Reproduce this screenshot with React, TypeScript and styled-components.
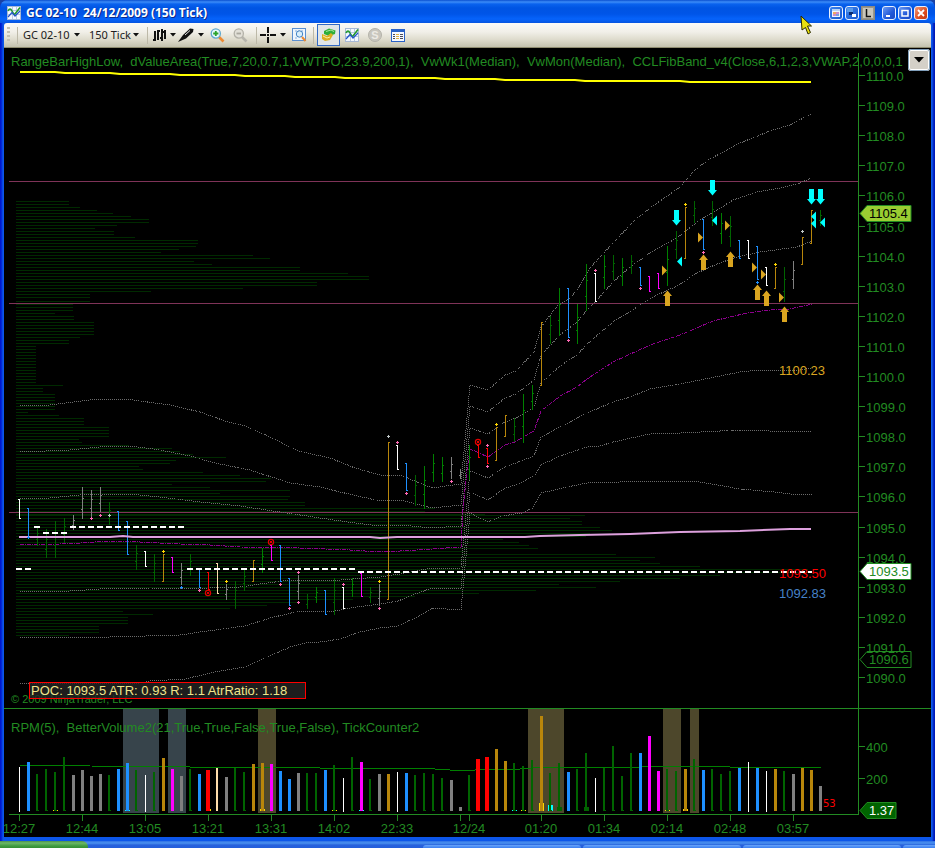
import React from "react";
import styled, { createGlobalStyle } from "styled-components";

const GlobalStyle = createGlobalStyle`
  * { box-sizing: border-box; }
  html, body { margin: 0; background: #1941a5; }
`;

const UI_FONT = `"Noto Sans", "Open Sans", sans-serif`;
const CHART_FONT = `"Liberation Sans", Arial, sans-serif`;

/* ---------- window frame ---------- */

const Desktop = styled.div`
  display: flex;
  flex-direction: column;
  min-height: 100vh;
  font-family: ${UI_FONT};
`;

const Frame = styled.main`
  position: relative;
  display: flex;
  flex-direction: column;
  padding: 0 4px 4px;
  border-radius: 8px 8px 0 0;
  background: linear-gradient(90deg, #0019cf 0, #0019cf 1px, #0c56ea 3px, #0c56ea calc(100% - 3px), #0019b8 calc(100% - 1px));
`;

const TitleBar = styled.header`
  display: flex;
  align-items: center;
  height: 23px;
  margin: 0 -4px;
  padding: 3px 7px 0;
  border-radius: 8px 8px 0 0;
  background: linear-gradient(180deg, #0a4fd0 0, #3c8cf8 2px, #0a62ee 4px, #0054e3 8px, #0055e8 14px, #0663fb 19px, #0554e0 23px);
`;

const Title = styled.h1`
  flex: 1;
  margin: 0 0 0 5px;
  font: 700 12px/18px "Open Sans", "Noto Sans", sans-serif;
  color: #fff;
  text-shadow: 1px 1px 0 #0a2a8c;
  white-space: pre;
`;

const Controls = styled.div`
  display: flex;
  gap: 2px;
  margin-left: 7px;
`;

const ControlButton = styled.button<{ $tone: "blue" | "red" | "gray" | "light" }>`
  display: flex;
  align-items: center;
  justify-content: center;
  width: 14px;
  height: 14px;
  padding: 0;
  border: 1px solid ${(p) => (p.$tone === "gray" ? "#8d8a80" : "#e8f0ff")};
  border-radius: ${(p) => (p.$tone === "gray" ? 0 : 3)}px;
  background: ${(p) =>
    ({
      blue: "linear-gradient(135deg, #6c9cf4, #2258d8 60%, #1a4ac4)",
      red: "linear-gradient(135deg, #f09878, #dc4c20 60%, #c03810)",
      gray: "#9a978c",
      light: "linear-gradient(135deg, #3c84f0, #1a58cc)",
    })[p.$tone]};
`;

const Toolbar = styled.nav`
  display: flex;
  align-items: center;
  height: 25px;
  padding: 0 3px;
  border-bottom: 1px solid #8f8c70;
  border-radius: 3px 3px 0 0;
  background: linear-gradient(180deg, #fbfaf7 0, #f1efe8 9px, #dddacb 17px, #c4c2ae 24px);
`;

const Grip = styled.span`
  width: 3px;
  height: 16px;
  background: repeating-linear-gradient(180deg, #c4c1b2 0, #c4c1b2 2px, transparent 2px, transparent 4px);
`;

const Separator = styled.span<{ $left: number; $right: number }>`
  width: 1px;
  height: 17px;
  margin-left: ${(p) => p.$left}px;
  margin-right: ${(p) => p.$right}px;
  background: #bdb9a8;
`;

const PickerLabel = styled.label<{ $width: number }>`
  display: flex;
  align-items: center;
  width: ${(p) => p.$width}px;
  & + & { margin-left: 9px; }
`;

const Picker = styled.select`
  appearance: none;
  flex: 1;
  min-width: 0;
  height: 18px;
  padding: 0;
  border: 0;
  background: transparent;
  color: #202020;
  font: 11px/18px ${UI_FONT};
`;

const ToolButton = styled.button<{ $width: number; $active?: boolean }>`
  display: flex;
  align-items: center;
  justify-content: center;
  gap: 4px;
  width: ${(p) => p.$width}px;
  height: ${(p) => (p.$active ? 22 : 20)}px;
  padding: 0;
  border: ${(p) => (p.$active ? "1px solid #316ac5" : "0")};
  background: ${(p) => (p.$active ? "#e1e6e8" : "transparent")};
`;

const ChartPane = styled.section`
  position: relative;
  background: #000;
`;

const ChartSvg = styled.svg`
  display: block;
  width: 100%;
  height: auto;
  font-family: ${CHART_FONT};
  font-size: 13px;
`;

const ListButton = styled.button`
  position: absolute;
  top: 1px;
  right: 1px;
  display: flex;
  align-items: center;
  justify-content: center;
  width: 22px;
  height: 22px;
  padding: 0;
  border: 2px solid #fff;
  border-radius: 3px;
  outline: 1px solid #7f9db9;
  outline-offset: -1px;
  background: #d4d0c8;
`;

const Pointer = styled.svg`
  position: absolute;
  top: 15px;
  right: 122px;
`;

const Taskbar = styled.footer`
  display: flex;
  flex: 1;
  min-height: 7px;
  overflow: hidden;
  background: linear-gradient(180deg, #2f6fe4 0, #4b92f0 2px, #2862dc 4px, #245edb 7px);
`;

const StartEdge = styled.div`
  flex: none;
  width: 88px;
  border-radius: 0 6px 0 0;
  background: linear-gradient(180deg, #4b8f4b 0, #6cb866 2px, #3f9a3f 5px, #358f35 7px);
`;

const TaskSlots = styled.div`
  display: flex;
  flex: 1;
  min-width: 0;
  gap: 2px;
  padding: 4px 0 0 335px;
`;

const TaskSlot = styled.div`
  flex: 0 0 158px;
  border-radius: 3px 3px 0 0;
  background: linear-gradient(180deg, #6aa5fa, #3c7ff0);
`;

/* ---------- icons ---------- */

const Caret = () => (
  <svg width="6" height="4" viewBox="0 0 6 4" aria-hidden="true">
    <path d="M0 0H6L3 3.5Z" fill="#111" />
  </svg>
);

const ChartIcon = () => (
  <svg width="14" height="14" viewBox="0 0 14 14" aria-hidden="true">
    <rect x="0.5" y="0.5" width="13" height="13" fill="#f4f8ff" stroke="#a7b9d6" />
    <path d="M1 4.5H13M1 8.5H13M5.5 1V13M9.5 1V13" stroke="#b9c9e4" />
    <path d="M1 5Q3 1 5 5T8 8L13 1.5" fill="none" stroke="#249a2c" strokeWidth="1.6" />
    <path d="M1 11L5 6.5L8 10L13 5" fill="none" stroke="#2454c8" strokeWidth="1.2" />
  </svg>
);

const Glass = ({ muted }: { muted?: boolean }) => (
  <svg width="15" height="15" viewBox="0 0 15 15" aria-hidden="true">
    <path d="M9 9L13.5 13.5" stroke={muted ? "#b7b5ad" : "#ed8a32"} strokeWidth="2.6" />
    <circle cx="5.8" cy="5.5" r="4.6" fill={muted ? "#e2e0d8" : "#e6f6fb"} stroke={muted ? "#b3b1a8" : "#5fa8cf"} strokeWidth="1.3" />
    <path d={muted ? "M3.5 5.5H8" : "M3.2 5.5H8.4M5.8 3V8"} stroke={muted ? "#aaa89f" : "#2ba32b"} strokeWidth="1.8" />
  </svg>
);

/* ---------- chart data ---------- */

const GREEN = "#228b22";
const TONES: Record<string, string> = {
  g: "#006400",
  n: "#008000",
  b: "#1e90ff",
  w: "#ffffff",
  a: "#808080",
  o: "#b8860b",
  m: "#ff00ff",
  r: "#ff0000",
  e: "#ffdead",
};
const barX = (i: number) => 19 + i * 9;

/* tone, high, low for every bar in time order */
const PRICE = `w499-519 b508-537 g527-546 g529-558 g521-558 g518-543 a515-530 a487-519 a490-518 a487-512
g502-525 b511-531 b521-555 g545-570 w551-567 g554-582 o554-582 m557-573 a563-585 g554-576
b569-588 r572-590 e563-594 a584-600 g581-609 g569-591 o560-582 n548-573 m545-561 b545-582
b578-606 a575-600 g594-609 n587-603 b590-615 g578-615 w587-609 n578-597 m573-597 g587-603
a584-606 o442-600 w445-470 b463-491 g475-506 n466-509 n454-482 n457-482 a457-479 a469-479
n445-480 r445-458 r448-464 o427-461 o415-437 g418-442 n394-443 n385-410 o322-386 g316-344
n288-336 b288-338 n304-344 n264-311 w273-302 n255-289 g255-280 n258-286 g255-274 b267-286
m276-292 m273-289 n246-286 g231-259 o207-259 g201-223 b219-250 g201-226 n213-244 g216-247
b240-259 w240-259 b246-280 w267-286 o267-289 g267-302 a261-289 o237-265 o210-244 g210-226`
  .split(/\s+/)
  .map((s) => {
    const [hi, lo] = s.slice(1).split("-").map(Number);
    return { tone: s[0], hi, lo };
  });

/* tone and bar top for every volume bar */
const VOLUME = `w767 b762 g774 g769 g772 g757 a775 a770 a776 a774 g775 b769 b763 g770 w775 g772 o758 m769 a776 g769
b774 r770 e768 a777 g768 g772 o764 o763 m764 b771 b779 a773 g773 g773 b770 g765 w778 g757 m762 g779
a774 o774 w772 b773 g775 g773 g774 g778 a780 a807 g775 r759 r757 o749 o761 g763 g766 g760 o716 g773
g763 b772 g769 g753 w778 g768 g746 g776 g753 b753 m736 m771 g769 g771 o769 g759 b770 g769 g774 g771
b768 w762 b768 w771 o769 g771 a774 o768 o770 a786`
  .split(/\s+/)
  .map((s) => ({ tone: s[0], top: Number(s.slice(1)) }));

const VOLUME_WIDTH: Record<string, number> = { g: 2, w: 1, e: 2, r: 4 };

/* right edge of each profile row, rows 3px apart */
const PROFILE_TOP = [69, 69, 80, 97, 113, 131, 149, 149, 117, 95, 114, 114, 135, 198, 198, 196, 179, 161, 253, 270, 194, 212, 300, 300, 348, 369, 369, 317, 317, 243, 151, 90, 90];
const PROFILE_MID = [90, 73, 73, 73, 55, 74, 74, 94, 94, 94, 94, 94, 80, 69, 69, 36, 36, 36, 36, 36, 36, 36, 36, 36, 36, 36, 36, 36, 63, 43, 43, 55, 55, 55, 55, 55, 55, 28, 59, 84, 84, 84, 109, 109, 109, 109, 79, 82, 129, 172, 180, 193, 226, 176, 170, 139, 143, 203, 240, 271, 266, 172, 210, 290, 220, 290, 288, 305, 305, 435, 425, 485];
const PROFILE_LOW = [585, 570, 582, 582, 600, 612, 590, 586, 503, 519, 529, 538, 468, 616, 655, 640, 660, 700, 808, 808, 720, 680, 620, 559, 596, 536, 479, 415, 353, 300, 267, 230, 123, 153, 128, 128, 128, 99, 99, 99, 69];
const profileRows = [
  ...PROFILE_TOP.map((x, i) => [201 + i * 3, x]),
  ...PROFILE_MID.map((x, i) => [301 + i * 3, x]),
  ...PROFILE_LOW.map((x, i) => [515 + i * 3, x]),
];

const BANDS = [
  "20,406 50,405 90,400 110,399 125,399 170,405 200,412 225,421 245,426 270,437 298,451 330,458 355,468 380,475 400,475 432,488 461,484 470,385 488,390 505,375 516,371 534,352 541,327 558,305 570,298 577,290 590,268 614,242 635,220 650,208 680,187 695,170 708,160 740,143 770,131 790,125 811,114",
  "20,452 70,450 110,446 130,446 160,450 190,456 215,463 250,470 290,483 320,487 340,492 380,501 400,500 432,508 461,505 470,406 488,412 505,398 516,394 534,380 541,355 560,335 577,322 587,310 595,302 613,282 630,267 650,253 677,238 697,222 717,210 733,200 757,192 780,188 797,184 812,178",
  "20,498 50,498 80,495 110,494 130,494 160,497 200,502 240,506 280,512 320,518 355,523 380,526 400,525 432,528 461,526 470,428 488,434 505,422 516,418 534,407 541,383 560,366 577,355 587,344 613,322 637,307 657,295 677,286 697,273 717,264 737,257 760,252 797,247 812,241",
  "20,591 70,591 100,589 150,588 210,588 240,587 260,584 290,580 340,580 380,577 400,574 432,568 461,568 470,471 488,478 505,467 516,463 534,456 541,437 560,427 587,413 613,402 630,397 650,389 680,384 740,372 760,370 800,370 812,368",
  "20,637 110,637 180,635 200,632 245,626 270,618 300,611 335,611 350,608 380,604 398,601 415,594 432,588 461,589 470,492 488,500 505,488 516,485 534,476 541,465 560,456 587,447 600,446 613,442 650,434 680,433 740,430 770,431 795,432 812,431",
  "20,684 140,683 150,681 185,679 215,672 245,667 265,658 290,647 305,643 320,642 340,639 360,632 380,628 398,626 417,617 433,608 461,610 470,513 488,522 502,516 522,513 533,508 541,493 567,487 587,483 620,482 650,481 700,482 740,489 775,492 790,494 812,495",
];
const MEDIAN =
  "20,545 60,544 80,543 110,541 140,542 180,544 210,545 240,547 300,548 350,550 380,552 400,551 432,549 461,547 463,510 467,470 470,449 488,457 505,445 515,442 534,431 541,411 560,396 577,387 587,379 613,362 650,345 680,335 713,321 747,313 770,310 790,309 812,304";

/* kind of marker (pink, yellow, blue, silver, ring), bar index, y */
const MARKS: [string, number, number][] = [
  ["b", 1, 537], ["p", 8, 518], ["p", 9, 515], ["s", 10, 515], ["y", 16, 551], ["b", 18, 587], ["p", 20, 590],
  ["ring", 21, 593], ["y", 23, 581], ["ring", 28, 542], ["p", 29, 584], ["p", 30, 608], ["p", 31, 572], ["p", 31, 602],
  ["p", 36, 584], ["y", 40, 581], ["p", 40, 608], ["s", 41, 436], ["p", 42, 442], ["p", 43, 493], ["p", 48, 481],
  ["ring", 51, 442], ["p", 52, 445], ["p", 52, 466], ["y", 53, 424], ["p", 61, 340], ["p", 64, 270], ["p", 69, 288],
  ["y", 74, 204], ["p", 76, 252], ["b", 82, 282], ["y", 84, 264], ["s", 87, 231],
];
const MARK_TONES: Record<string, string> = { p: "#ff69b4", y: "#ffd700", b: "#1e90ff", s: "#c0c8c8" };

const ARROWS_DOWN = [[676, 210], [712, 180], [811, 189], [820, 189]];
const ARROWS_UP = [[667, 291], [703, 255], [730, 252], [757, 285], [766, 291], [784, 307]];
const TRI_LEFT = [[677, 261], [712, 220], [811, 216], [811, 223], [820, 222]];
const TRI_RIGHT = [[662, 270], [698, 237], [725, 225], [752, 267], [761, 274], [779, 297]];

const TIMES: [number, string][] = [
  [19, "12:27"], [82, "12:44"], [145, "13:05"], [208, "13:21"], [271, "13:31"], [334, "14:02"], [397, "22:33"],
  [469, "12/24"], [541, "01:20"], [604, "01:34"], [667, "02:14"], [730, "02:48"], [793, "03:57"],
];

const ZONES = [[123, 36, "#37444b"], [168, 18, "#37444b"], [258, 18, "#4d472b"], [528, 36, "#4d472b"], [663, 18, "#4d472b"], [690, 9, "#4d472b"]] as const;

const BLIPS = [
  [53, 810, "#ffd700"], [125, 810, "#00ffff"], [206, 809, "#ffd700"], [260, 809, "#ffd700"], [332, 810, "#ffd700"],
  [359, 810, "#00ffff"], [512, 810, "#00ffff"], [521, 810, "#ffd700"], [539, 803, "#ffd700"], [548, 805, "#00ffff"],
  [557, 807, "#006400"], [584, 807, "#006400"], [665, 810, "#ffd700"], [683, 809, "#ffd700"],
] as const;

/* indicator names are separated by a comma and two spaces */
const PRICE_INDICATORS = [
  "RangeBarHighLow",
  "dValueArea(True,7,20,0.7,1,VWTPO,23.9,200,1)",
  "VwWk1(Median)",
  "VwMon(Median)",
  "CCLFibBand_v4(Close,6,1,2,3,VWAP,2,0,0,0,1",
].join(",\u00a0 ");

/* ---------- chart parts ---------- */

const Mark = ({ kind, x, y }: { kind: string; x: number; y: number }) =>
  kind === "ring" ? (
    <g fill="none" stroke="#e00000">
      <circle cx={x} cy={y} r="2.6" strokeWidth="1.2" />
      <path d={`M${x - 1} ${y}h2`} strokeWidth="2" />
    </g>
  ) : (
    <path d={`M${x - 1} ${y + 0.5}h3M${x + 0.5} ${y - 1}v3`} stroke={MARK_TONES[kind]} />
  );

const Tag = ({ y, text, fill, color, width = 44 }: { y: number; text: string; fill: string; color: string; width?: number }) => (
  <g>
    <path d={`M860 ${y + 0.5}l7 -8h${width}v16h${-width}z`} fill={fill} stroke={GREEN} />
    <text x="869" y={y + 5} fill={color}>{text}</text>
  </g>
);

const ProfileLayer = () => (
  <g stroke="#002a00" shapeRendering="crispEdges">
    {profileRows.map(([y, x]) => (
      <path key={y} d={`M16 ${y + 0.5}H${x}`} />
    ))}
  </g>
);

const BandLayer = () => (
  <g fill="none" shapeRendering="crispEdges">
    {BANDS.map((points) => (
      <polyline key={points} points={points} stroke="#6c6c6c" strokeDasharray="1 1" />
    ))}
    <polyline points={MEDIAN} stroke="#8b008b" strokeDasharray="4 1 1 1" />
  </g>
);

const PriceLayer = () => (
  <g shapeRendering="crispEdges">
    {PRICE.map(({ tone, hi, lo }, i) => {
      const x = barX(i);
      const rising = tone === "o";
      const third = Math.round((lo - hi) / 3);
      const plain = tone === "g" || tone === "n" || tone === "a";
      const open = rising ? lo - 1 : hi + (plain ? third * 2 : 0);
      const close = rising ? hi : plain ? hi + third : lo - 1;
      return (
        <path
          key={i}
          d={`M${x + 0.5} ${hi}V${lo}M${x - 1} ${open + 0.5}h2M${x} ${close + 0.5}h2`}
          stroke={TONES[tone]}
        />
      );
    })}
  </g>
);

const SignalLayer = () => (
  <g>
    {MARKS.map(([kind, i, y]) => (
      <Mark key={`${i}-${y}`} kind={kind} x={barX(i)} y={y} />
    ))}
    <g fill="#00ffff">
      {ARROWS_DOWN.map(([x, y]) => (
        <path key={x} d={`M${x - 2} ${y}h5v10h2l-4.5 5.5l-4.5 -5.5h2z`} />
      ))}
      {TRI_LEFT.map(([x, y]) => (
        <path key={`${x}-${y}`} d={`M${x} ${y + 0.5}l5 -5v10z`} />
      ))}
    </g>
    <g fill="#daa520">
      {ARROWS_UP.map(([x, y]) => (
        <path key={x} d={`M${x - 2} ${y + 15}h5v-10h2l-4.5 -5.5l-4.5 5.5h2z`} />
      ))}
      {TRI_RIGHT.map(([x, y]) => (
        <path key={x} d={`M${x + 5} ${y + 0.5}l-5 -5v10z`} />
      ))}
    </g>
  </g>
);

const VolumeLayer = () => (
  <g shapeRendering="crispEdges">
    <polyline
      points="20,765 80,765 90,766 190,767 320,768 435,769 450,770 475,770 490,769 520,769 545,767 640,767 655,766 720,766 730,767 821,767"
      fill="none"
      stroke="#008000"
    />
    {BLIPS.map(([x, y, fill]) => (
      <rect key={x} x={x} y={y} width="5" height={811 - y} fill={fill} />
    ))}
    {VOLUME.map(({ tone, top }, i) => {
      const w = VOLUME_WIDTH[tone] ?? 3;
      const x = barX(i) - (w > 1 ? 1 : 0) - (w > 3 ? 1 : 0);
      return (
        <g key={i} fill={TONES[tone]}>
          <rect x={x} y={top} width={w} height={(w === 1 ? 812 : 811) - top} />
          {tone === "g" && <rect x={x} y={810} width="3" height="1" />}
        </g>
      );
    })}
  </g>
);

const AxisLayer = () => (
  <g>
    <path d="M858.5 53V815M4 708.5H931M9 814.5H858" stroke={GREEN} />
    {Array.from({ length: 21 }, (_, i) => {
      const y = Math.round(75 + i * 30.1);
      return (
        <g key={i}>
          <path d={`M859 ${y + 0.5}h6`} stroke={GREEN} />
          <text x="866" y={y + 6} fill={GREEN}>{(1110 - i).toFixed(1)}</text>
        </g>
      );
    })}
    {[[746, "400"], [778, "200"]].map(([y, label]) => (
      <g key={label}>
        <path d={`M859 ${Number(y) + 0.5}h6`} stroke={GREEN} />
        <text x="866" y={Number(y) + 6} fill={GREEN}>{label}</text>
      </g>
    ))}
    <path d="M460.5 815v6" stroke={GREEN} />
    {TIMES.map(([x, label]) => (
      <g key={label}>
        <path d={`M${x + 0.5} 815v6`} stroke={GREEN} />
        <text x={x} y="833" textAnchor="middle" fill={GREEN}>{label}</text>
      </g>
    ))}
  </g>
);

const Chart = () => (
  <ChartSvg viewBox="4 48 927 789" role="img" aria-label="GC 02-10 price and volume chart">
    {ZONES.map(([x, w, fill]) => (
      <rect key={x} x={x} y="709" width={w} height="104" fill={fill} />
    ))}
    <ProfileLayer />
    <path d="M9 181.5H858M9 303.5H858M9 512.5H858" stroke="#7f3358" />
    <BandLayer />
    <polyline points="20,72 55,72 65,73 110,73 120,74 170,74 180,75 235,75 245,76 285,76 295,77 335,77 345,78 435,78 445,79 495,79 505,80 575,80 585,81 680,81 690,82 811,82" fill="none" stroke="#ffff00" strokeWidth="2" />
    <PriceLayer />
    <polyline points="19,537 110,537 123,536 133,537 370,537 380,538 397,537 525,537 540,536 580,535 630,534 680,532 740,531 790,529 811,529" fill="none" stroke="#dda0dd" strokeWidth="2" />
    <path d="M34 527h6M43 533h24M70 527h114M16 569h15M187 569h168M358 572h454" stroke="#fff" strokeWidth="2" strokeDasharray="6 3" shapeRendering="crispEdges" />
    <SignalLayer />
    <VolumeLayer />
    <AxisLayer />
    <g fill={GREEN}>
      <text x="11" y="66">{PRICE_INDICATORS}</text>
      <text x="11" y="732">{"RPM(5),\u00a0 BetterVolume2(21,True,True,False,True,False), TickCounter2"}</text>
      <text x="11" y="703" fontSize="11">© 2009 NinjaTrader, LLC</text>
    </g>
    <rect x="29.5" y="682.5" width="276" height="16" fill="#242424" fillOpacity="0.8" stroke="#ff0000" />
    <text x="31" y="695" fill="#f0e68c">POC: 1093.5 ATR: 0.93 R: 1.1 AtrRatio: 1.18</text>
    <text x="779" y="375" fill="#daa520">1100.23</text>
    <text x="779" y="578" fill="#ff0000">1093.50</text>
    <text x="779" y="598" fill="#4682c8">1092.83</text>
    <text x="823" y="807" fill="#ff0000" fontSize="10" fontFamily="DejaVu Sans, sans-serif">53</text>
    <Tag y={213} text="1105.4" fill="#9acd32" color="#000" />
    <Tag y={571} text="1093.5" fill="#fff" color={GREEN} />
    <Tag y={659} text="1090.6" fill="none" color={GREEN} />
    <Tag y={810} text="1.37" fill="#006400" color="#fff" width={29} />
  </ChartSvg>
);

/* ---------- page ---------- */

export default function App() {
  return (
    <Desktop>
      <GlobalStyle />
      <Frame>
        <TitleBar>
          <ChartIcon />
          <Title>GC 02-10  24/12/2009 (150 Tick)</Title>
          <Controls>
            <ControlButton $tone="light" aria-label="Display colours">
              <svg width="10" height="10" viewBox="0 0 10 10"><rect x="1" y="1" width="8" height="8" fill="#eef4ff" /><rect x="1" y="1" width="8" height="2" fill="#b8d4f8" /><rect x="2" y="4" width="6" height="4" fill="#d08ac8" /><rect x="2" y="4" width="3" height="2" fill="#f0a860" /><rect x="5" y="6" width="3" height="2" fill="#78a0e0" /></svg>
            </ControlButton>
            <ControlButton $tone="light" aria-label="Link windows">
              <svg width="10" height="10" viewBox="0 0 10 10"><rect width="6" height="4" fill="#5a9ae8" /><rect x="2" y="4" width="4" height="3" fill="#0a2a70" /><rect x="5" y="6" width="4" height="3" fill="#fff" /></svg>
            </ControlButton>
            <ControlButton $tone="gray" aria-label="Lock">
              <svg width="10" height="10" viewBox="0 0 10 10"><rect width="10" height="10" fill="#c8c5ba" /><path d="M3.5 1V8.5H8" fill="none" stroke="#111" strokeWidth="1.5" /></svg>
            </ControlButton>
          </Controls>
          <Controls>
            <ControlButton $tone="blue" aria-label="Minimize">
              <svg width="10" height="10" viewBox="0 0 10 10"><path d="M2 8H6" stroke="#fff" strokeWidth="2" /></svg>
            </ControlButton>
            <ControlButton $tone="blue" aria-label="Maximize">
              <svg width="10" height="10" viewBox="0 0 10 10"><path d="M2 2.5H8V8H2Z" fill="none" stroke="#fff" strokeWidth="1.5" /></svg>
            </ControlButton>
            <ControlButton $tone="red" aria-label="Close">
              <svg width="10" height="10" viewBox="0 0 10 10"><path d="M2 2L8 8M8 2L2 8" stroke="#fff" strokeWidth="1.8" /></svg>
            </ControlButton>
          </Controls>
        </TitleBar>
        <Toolbar aria-label="Chart tools">
          <Grip />
          <Separator $left={7} $right={5} />
          <PickerLabel $width={57}>
            <Picker aria-label="Instrument"><option>GC 02-10</option></Picker>
            <Caret />
          </PickerLabel>
          <PickerLabel $width={50}>
            <Picker aria-label="Interval"><option>150 Tick</option></Picker>
            <Caret />
          </PickerLabel>
          <Separator $left={8} $right={4} />
          <ToolButton $width={24} aria-label="Chart style">
            <svg width="13" height="14" viewBox="0 0 13 14"><path d="M2 3V13M0 12H2M5 2V12M5 3H7M9 1V13M7 10H9M12 2V11M9 4H12" fill="none" stroke="#111" strokeWidth="2" /></svg>
            <Caret />
          </ToolButton>
          <ToolButton $width={29} aria-label="Draw">
            <svg width="16" height="15" viewBox="0 0 16 15"><path d="M0 14L5 7L12 0.5L15.5 1L15 4L8 10.5Z" fill="#111" /><path d="M7 7L12 2.5" stroke="#ddd" /></svg>
            <Caret />
          </ToolButton>
          <ToolButton $width={24} aria-label="Zoom in"><Glass /></ToolButton>
          <ToolButton $width={23} aria-label="Zoom out"><Glass muted /></ToolButton>
          <Separator $left={4} $right={3} />
          <ToolButton $width={26} aria-label="Crosshair">
            <svg width="16" height="16" viewBox="0 0 16 16"><path d="M0 8H6M10 8H16M8 0V6M8 10V16" stroke="#111" strokeWidth="2" /><path d="M7 8h2" stroke="#111" strokeWidth="2" /></svg>
            <Caret />
          </ToolButton>
          <ToolButton $width={26} aria-label="Zoom frame">
            <svg width="15" height="14" viewBox="0 0 15 14"><rect x="0.5" y="0.5" width="13" height="12" fill="#eef5fc" stroke="#5b8fd0" /><path d="M3 3H11M3 10H6" stroke="#88aede" strokeDasharray="2 1" /><circle cx="7.5" cy="6" r="3.2" fill="#d9eefa" stroke="#4484c4" /><path d="M10 9L13.5 13" stroke="#ed8a32" strokeWidth="2" /></svg>
          </ToolButton>
          <Separator $left={1} $right={3} />
          <ToolButton $width={23} $active aria-label="Chart trader">
            <svg width="16" height="14" viewBox="0 0 16 14"><path d="M3 3L8 0.5L14.5 2.5L14 6L8 8L3 6Z" fill="#2fae38" /><path d="M5 3.5L10 2L13 3.5" fill="none" stroke="#a7e8a0" /><path d="M1 6L6 8L10 5L12 7L9 12L4 13L1 11Z" fill="#dcae20" /><path d="M2 8L6 10L9 9" fill="none" stroke="#fff0a0" /></svg>
          </ToolButton>
          <ToolButton $width={23} aria-label="Data series"><ChartIcon /></ToolButton>
          <ToolButton $width={23} aria-label="Strategies">
            <svg width="14" height="14" viewBox="0 0 14 14"><circle cx="7" cy="7" r="6.5" fill="#c8c6be" stroke="#b4b2a9" /><text x="7" y="11" textAnchor="middle" fontSize="11" fontWeight="700" fill="#eceae4">S</text></svg>
          </ToolButton>
          <ToolButton $width={23} aria-label="Properties">
            <svg width="14" height="13" viewBox="0 0 14 13"><rect x="0.5" y="0.5" width="13" height="12" fill="#f6f9ff" stroke="#2a62c8" /><path d="M0 1.5H14" stroke="#2a62c8" strokeWidth="3" /><path d="M2 5.5H4M2 7.5H4M2 9.5H4M9 5.5H12M9 7.5H12M9 9.5H12" stroke="#4a4a5a" /><path d="M5 5.5H8M5 7.5H8M5 9.5H8" stroke="#e0b040" /></svg>
          </ToolButton>
        </Toolbar>
        <ChartPane>
          <Chart />
          <ListButton aria-label="Indicator list">
            <svg width="10" height="6" viewBox="0 0 10 6"><path d="M0 0H10L5 5.5Z" fill="#000" /></svg>
          </ListButton>
        </ChartPane>
        <Pointer width="13" height="20" viewBox="0 0 13 20" aria-hidden="true">
          <path d="M1 1L11.5 11H7.5L10.5 17.5L8 19L5.5 12.5L2 15Z" fill="#e8e010" stroke="#2a2a00" />
        </Pointer>
      </Frame>
      <Taskbar>
        <StartEdge />
        <TaskSlots>
          <TaskSlot /><TaskSlot /><TaskSlot /><TaskSlot />
        </TaskSlots>
      </Taskbar>
    </Desktop>
  );
}
